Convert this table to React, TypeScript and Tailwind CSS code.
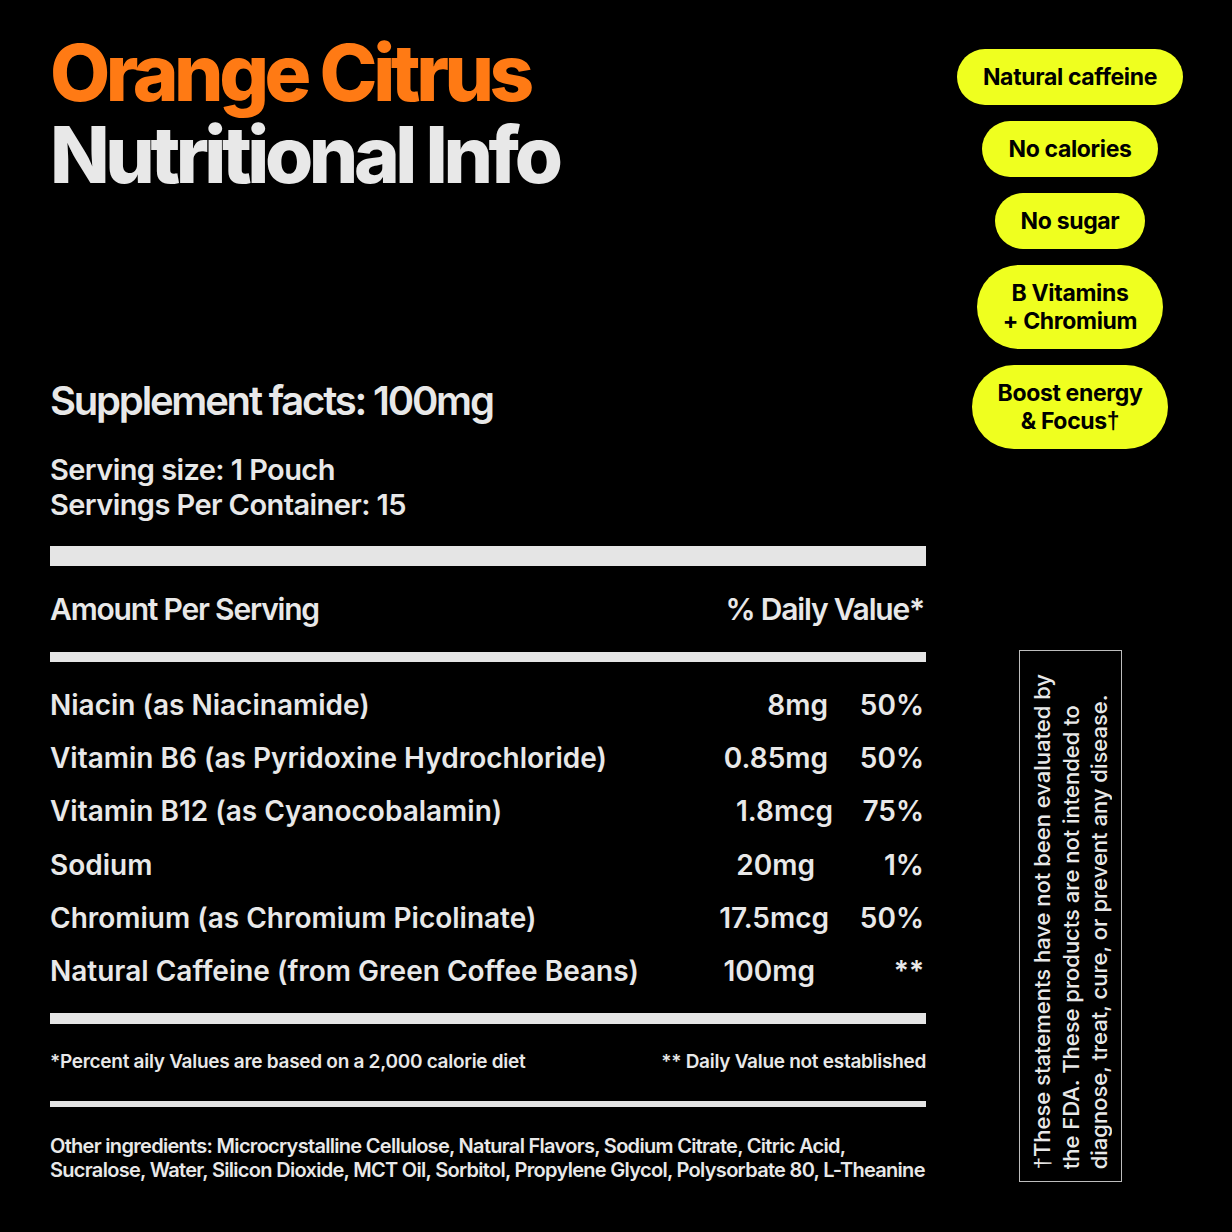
const pills = [
  ["Natural caffeine"],
  ["No calories"],
  ["No sugar"],
  ["B Vitamins", "+ Chromium"],
  ["Boost energy", "& Focus"],
];

const rows = [
  { name: "Niacin (as Niacinamide)", amount: "8mg", pr: "pr-[5px]", dv: "50%" },
  { name: "Vitamin B6 (as Pyridoxine Hydrochloride)", amount: "0.85mg", pr: "pr-[5px]", dv: "50%" },
  { name: "Vitamin B12 (as Cyanocobalamin)", amount: "1.8mcg", pr: "pr-0", dv: "75%" },
  { name: "Sodium", amount: "20mg", pr: "pr-[18px]", dv: "1%" },
  { name: "Chromium (as Chromium Picolinate)", amount: "17.5mcg", pr: "pr-[4px]", dv: "50%" },
  { name: "Natural Caffeine (from Green Coffee Beans)", amount: "100mg", pr: "pr-[18px]", dv: "**" },
];

const Dagger = () => <span className="font-['Liberation_Sans',sans-serif]">†</span>;

const App = () => {
  return (
    <div className="w-[1232px] h-[1232px] bg-black flex text-[#e8e8e8] font-['Inter','Liberation_Sans',sans-serif] overflow-hidden">
      {/* Left: facts panel */}
      <div className="w-[926px] pl-[50px] pt-[32px] flex flex-col">
        <h1 className="text-[78px] leading-[82px] font-extrabold tracking-[-0.057em]">
          <span className="block text-[#ff7a14]">Orange Citrus</span>
          <span className="block">Nutritional Info</span>
        </h1>

        <h2 className="mt-[181px] text-[40px] leading-[48px] font-semibold tracking-[-0.055em]">
          Supplement facts: 100mg
        </h2>

        <div className="mt-[27px] text-[29px] leading-[35px] font-semibold tracking-[-0.02em]">
          <p>Serving size: 1 Pouch</p>
          <p>Servings Per Container: 15</p>
        </div>

        <div className="mt-[24px] h-[20px] bg-[#e5e5e5]" />

        <div className="mt-[25px] flex justify-between text-[30px] leading-[36px] font-semibold tracking-[-0.04em]">
          <span>Amount Per Serving</span>
          <span className="pr-[2px]">% Daily Value*</span>
        </div>

        <div className="mt-[25px] h-[10px] bg-[#e5e5e5]" />

        {/* Nutrient rows */}
        <div className="mt-[17px] flex flex-col text-[28px] leading-[53px] font-semibold tracking-normal">
          {rows.map((r) => (
            <div key={r.name} className="h-[53.2px] flex">
              <span className="flex-1">{r.name}</span>
              <span className={`text-right ${r.pr}`}>{r.amount}</span>
              <span className="w-[93px] text-right pr-[2px]">{r.dv}</span>
            </div>
          ))}
        </div>

        <div className="mt-[15px] h-[11px] bg-[#e5e5e5]" />

        <div className="mt-[26px] flex justify-between text-[19px] leading-[24px] font-semibold tracking-[-0.015em]">
          <span>*Percent aily Values are based on a 2,000 calorie diet</span>
          <span>** Daily Value not established</span>
        </div>

        <div className="mt-[27px] h-[6px] bg-[#e5e5e5]" />

        <p className="mt-[27px] text-[20px] leading-[24px] font-semibold tracking-[-0.035em] whitespace-nowrap">
          Other ingredients: Microcrystalline Cellulose, Natural Flavors, Sodium Citrate, Citric Acid,
          <br />
          Sucralose, Water, Silicon Dioxide, MCT Oil, Sorbitol, Propylene Glycol, Polysorbate 80, L-Theanine
        </p>
      </div>

      {/* Right: claims + disclaimer */}
      <div className="flex-1 pr-[18px] pt-[49px] pb-[50px] flex flex-col items-center">
        <div className="flex flex-col items-center gap-[16px]">
          {pills.map((lines, i) => (
            <div
              key={lines.join(" ")}
              className="bg-[#efff1f] text-black rounded-full px-[26px] py-[14px] text-center text-[23px] leading-[28px] font-bold tracking-[-0.015em]"
            >
              {lines.map((l, j) => (
                <span key={l} className="block whitespace-nowrap">
                  {l}
                  {i === 4 && j === 1 && <Dagger />}
                </span>
              ))}
            </div>
          ))}
        </div>

        <div className="mt-auto w-[103px] h-[532px] border border-[#bdbdbd] flex items-end justify-center pb-[12px]">
          <p className="[writing-mode:vertical-rl] [text-orientation:sideways] rotate-180 text-[22px] leading-[28px] font-medium tracking-normal whitespace-nowrap">
            <Dagger />
            These statements have not been evaluated by
            <br />
            the FDA. These products are not intended to
            <br />
            diagnose, treat, cure, or prevent any disease.
          </p>
        </div>
      </div>
    </div>
  );
};

export default App;
